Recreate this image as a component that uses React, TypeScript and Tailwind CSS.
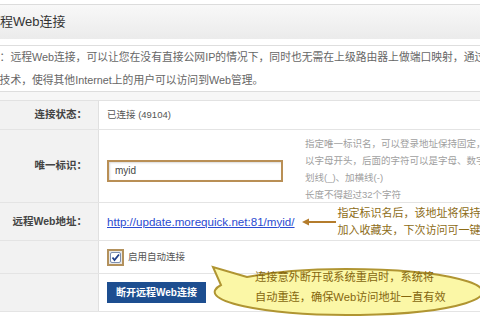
import React from "react";

export default function App() {
  return (
    <div className="relative w-[480px] h-[320px] overflow-hidden bg-white font-['Liberation_Sans','Noto_Sans_CJK_SC',sans-serif]">
      {/* header */}
      <div className="h-[4px] bg-white" />
      <div className="h-[35px] border-t border-[#dcdcdc] bg-gradient-to-b from-[#f8f8f8] to-[#ebebeb] flex items-center">
        <span className="ml-[-13px] text-[13px] text-[#333] whitespace-nowrap">远程Web连接</span>
      </div>
      <div className="h-[6px] bg-white" />
      {/* description */}
      <div className="border-t border-[#dedede] border-b h-[47px] text-[10.8px] leading-[23px] text-[#666] whitespace-nowrap">
        <div className="ml-[-22px]">说明：远程Web连接，可以让您在没有直接公网IP的情况下，同时也无需在上级路由器上做端口映射，通过远程</div>
        <div className="ml-[-22px]">穿透技术，使得其他Internet上的用户可以访问到Web管理。</div>
      </div>
      <div className="h-[8px] bg-[#f7f7f7]" />
      {/* table */}
      <div className="border-t border-[#e2e2e2]">
        <Row h="h-[29px]" label="连接状态：">
          <span className="text-[9.5px] text-[#555]">已连接 (49104)</span>
        </Row>
        <Row h="h-[73px]" label="唯一标识：">
          <div className="flex items-start w-full">
            <div className="mt-[30px] w-[176px] h-[22px] border-2 border-[#b98f55] shadow-[inset_1px_1px_2px_rgba(0,0,0,0.15)] flex items-center pl-[6px] text-[10px] text-[#444] shrink-0">
              myid
            </div>
            <div className="ml-[22px] mt-[5px] text-[9.5px] leading-[17px] text-[#a0a0a0] whitespace-nowrap">
              <div>指定唯一标识名，可以登录地址保持固定，必须</div>
              <div>以字母开头，后面的字符可以是字母、数字、下</div>
              <div>划线(_)、加横线(-)</div>
              <div>长度不得超过32个字符</div>
            </div>
          </div>
        </Row>
        <Row h="h-[38px]" label="远程Web地址：">
          <div className="flex items-center whitespace-nowrap">
            <span className="text-[11.6px] text-[#2b4bd1] underline">http://update.morequick.net:81/myid/</span>
            <svg className="ml-[6px] shrink-0" width="36" height="10" viewBox="0 0 36 10">
              <line x1="4" y1="5" x2="35" y2="5" stroke="#b47c2c" strokeWidth="2" />
              <path d="M1 5 L8 1.5 L8 8.5 Z" fill="#b47c2c" />
            </svg>
            <div className="ml-[1px] text-[11px] leading-[17px] text-[#8d6c16]">
              <div>指定标识名后，该地址将保持不变，可</div>
              <div>加入收藏夹，下次访问可一键直达</div>
            </div>
          </div>
        </Row>
        <Row h="h-[33px]" label="">
          <div className="flex items-center">
            <div className="w-[17px] h-[17px] border-2 border-[#b3915c] flex items-center justify-center bg-[#e8e8e8]">
              <svg width="11" height="11" viewBox="0 0 11 11">
                <rect x="0.5" y="0.5" width="10" height="10" rx="1.5" fill="#fff" stroke="#7d8fb0" />
                <path d="M2.5 5.5 L4.5 8 L9 2.5" fill="none" stroke="#1f3f8a" strokeWidth="1.8" />
              </svg>
            </div>
            <span className="ml-[4px] text-[9.5px] text-[#555]">启用自动连接</span>
          </div>
        </Row>
        <Row h="h-[38px]" label="">
          <button className="w-[99px] h-[21px] bg-[#1d4e90] text-white text-[10px] font-bold flex items-center justify-center whitespace-nowrap">
            断开远程Web连接
          </button>
        </Row>
      </div>

      {/* speech bubble */}
      <svg className="absolute left-[205px] top-[258px]" width="300" height="60" viewBox="0 0 300 60">
        <path
          d="M42 19 L8 9 L16 27 A134 23 0 1 0 42 19 Z"
          fill="#fbf7a6"
          stroke="#b09532"
          strokeWidth="2"
        />
      </svg>
      <div className="absolute left-[255px] top-[267px] text-[11.2px] leading-[20px] text-[#85660e] whitespace-nowrap">
        <div>连接意外断开或系统重启时，系统将</div>
        <div>自动重连，确保Web访问地址一直有效</div>
      </div>
    </div>
  );
}

function Row({ h, label, children }: { h: string; label: string; children: React.ReactNode }) {
  return (
    <div className={`flex border-b border-[#e4e4e4] ${h}`}>
      <div className="w-[99px] shrink-0 bg-[#f2f2f2] border-r border-[#e0e0e0] flex items-center justify-end pr-[11px] text-[10.5px] font-semibold text-[#444] whitespace-nowrap">
        {label}
      </div>
      <div className="flex-1 flex items-center pl-[8px] overflow-hidden">{children}</div>
    </div>
  );
}
